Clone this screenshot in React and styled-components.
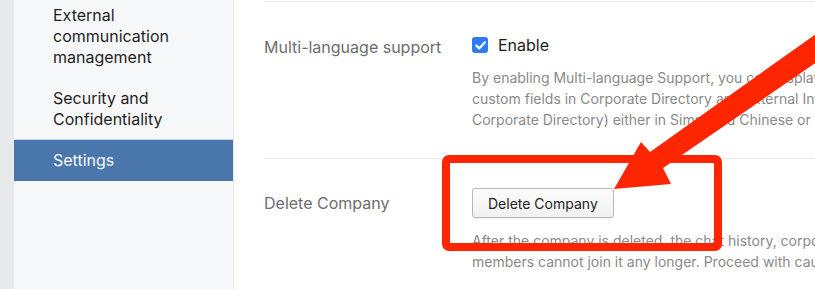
import React from 'react';
import styled, { createGlobalStyle } from "styled-components";

const GlobalStyle = createGlobalStyle`
    html, body {
        margin: 0;
        padding: 0;
        overflow: hidden;
        background: #fff;
    }
    body {
        font-family: Inter, "Noto Sans", "Liberation Sans", sans-serif;
        -webkit-font-smoothing: antialiased;
    }
`;

const Page = styled.div`
    position: relative;
    display: flex;
    width: 815px;
    height: 289px;
    overflow: hidden;
`;

const Gutter = styled.div`
    width: 14px;
    flex-shrink: 0;
    background: #e8e9eb;
`;

const Sidebar = styled.div`
    width: 219px;
    flex-shrink: 0;
    background: #f7f8fa;
    border-right: 1px solid #e6e7e9;
`;

const NavList = styled.div`
    margin-top: -5px;
    display: flex;
    flex-direction: column;
`;

const NavItem = styled.div`
    padding: 10px 20px 10px 39px;
    font-size: 16px;
    line-height: 21px;
    color: ${({ active }) => active ? "#f4f7fb" : "#1f1f1f"};
    background: ${({ active }) => active ? "#4a77ab" : "transparent"};
    border-top: 1px solid ${({ active }) => active ? "#c9d5e3" : "transparent"};
    margin-top: -1px;
`;

const Main = styled.div`
    flex: 1;
    padding-left: 30px;
    min-width: 0;
`;

const Section = styled.div`
    display: grid;
    grid-template-columns: 208px 1fr;
    border-top: 1px solid #e9e9e9;
    padding: ${({ top }) => top}px 0 28px;
    margin-top: ${({ first }) => first ? "1px" : "0"};
`;

const Label = styled.div`
    font-size: 16px;
    line-height: 21px;
    color: #6e6e6e;
    padding-top: ${({ offset }) => offset || 0}px;
    white-space: nowrap;
`;

const Field = styled.div`
    display: flex;
    flex-direction: column;
    gap: 12px;
    white-space: nowrap;
`;

const CheckRow = styled.label`
    display: flex;
    align-items: center;
    gap: 10px;
    height: 20px;
    font-size: 16px;
    color: #1c1c1c;
`;

const Check = styled.span`
    width: 16px;
    height: 16px;
    border-radius: 3px;
    background: #2f7cf6;
    display: flex;
    align-items: center;
    justify-content: center;
`;

const Hint = styled.div`
    font-size: 14px;
    line-height: 21px;
    color: #8a8a8a;
`;

const Button = styled.button`
    align-self: flex-start;
    height: 30px;
    padding: 0 15px;
    font-family: inherit;
    font-size: 14px;
    color: #222;
    background: linear-gradient(#fdfdfd, #f1f1f1);
    border: 1px solid #b9b9b9;
    border-radius: 3px;
    box-shadow: 0 1px 1px rgba(0, 0, 0, 0.06);
`;

const Markup = styled.svg`
    position: absolute;
    left: 0;
    top: 0;
    pointer-events: none;
`;

const App = () => {
    return (
        <>
            <GlobalStyle />
            <Page>
                <Gutter />
                <Sidebar>
                    <NavList>
                        <NavItem>External<br />communication<br />management</NavItem>
                        <NavItem>Security and<br />Confidentiality</NavItem>
                        <NavItem active>Settings</NavItem>
                    </NavList>
                </Sidebar>
                <Main>
                    <Section first top={33}>
                        <Label offset={2}>Multi-language support</Label>
                        <Field>
                            <CheckRow>
                                <Check>
                                    <svg width="11" height="9" viewBox="0 0 11 9">
                                        <path d="M1.3 4.6 L4.2 7.4 L9.7 1.4" fill="none" stroke="#fff" strokeWidth="2.2" strokeLinecap="round" strokeLinejoin="round" />
                                    </svg>
                                </Check>
                                Enable
                            </CheckRow>
                            <Hint>
                                By enabling Multi-language Support, you can display the names of members, departments and<br />
                                custom fields in Corporate Directory and External Info (excluding those synced from the<br />
                                Corporate Directory) either in Simplified Chinese or English.
                            </Hint>
                        </Field>
                    </Section>
                    <Section top={29}>
                        <Label offset={5}>Delete Company</Label>
                        <Field>
                            <Button>Delete Company</Button>
                            <Hint>
                                After the company is deleted, the chat history, corporate data and files will be cleared, and<br />
                                members cannot join it any longer. Proceed with caution.
                            </Hint>
                        </Field>
                    </Section>
                </Main>
                <Markup width="815" height="289" viewBox="0 0 815 289">
                    <rect x="446" y="159" width="272" height="88" rx="3" fill="none" stroke="#fe2600" strokeWidth="8" />
                    <path d="M614 189 L641 142 L650 152 L830 24 L830 53 L663 168 L671 184 Z" fill="#fe2600" />
                </Markup>
            </Page>
        </>
    )
}

export default App
